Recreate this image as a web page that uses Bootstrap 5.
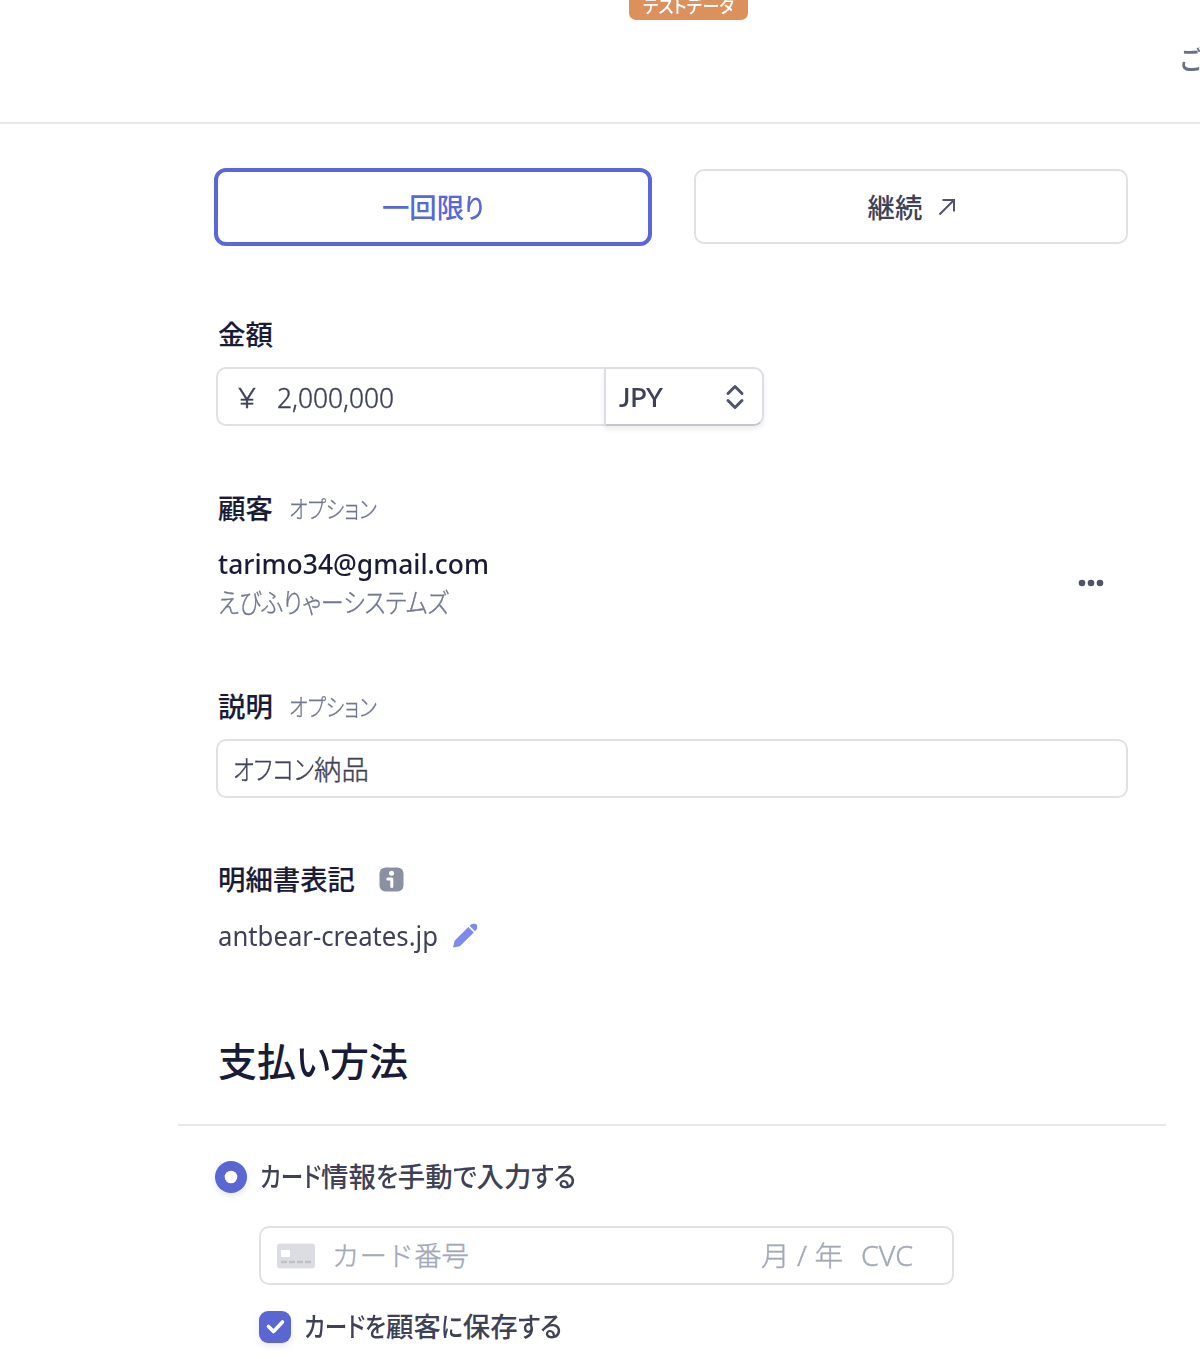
<!DOCTYPE html>
<html lang="ja">
<head>
<meta charset="utf-8">
<meta name="viewport" content="width=device-width, initial-scale=1">
<title>支払いを作成</title>
<link href="https://cdn.jsdelivr.net/npm/bootstrap@5.3.0/dist/css/bootstrap.min.css" rel="stylesheet">
<style>
body{font-family:"Noto Sans","Noto Sans CJK JP",sans-serif;font-size:27.4px;line-height:40px;color:#3f4257;background:#fff;overflow:hidden;height:1359px}
.topbar{height:124px;border-bottom:2px solid #e7e9f2}
.test-tag{left:629px;top:-14px;width:119px;height:34px;border-radius:7px;background:#dc915d;color:#fff;font-size:18px;font-weight:500;line-height:41px;padding-left:14px}
.help-link{left:1180px;top:40px;width:20px;overflow:hidden;color:#6a7084;font-weight:500;white-space:nowrap}
.pay-form{width:912px;margin-left:216px}
.type-row{padding-top:44px;height:123px}
.type-btn{border-radius:10px;border:2px solid #e0e1e5;background:#fff;padding-top:2px}
.type-one{width:438px;height:78px;margin-left:-2px;border:4px solid #5a67d8;color:#5a67d8;border-radius:12px}
.type-rec{width:434px;height:75px;margin-top:1px;gap:16px;padding-left:2px}
.type-rec svg{margin-bottom:2px}
.strong-text{font-weight:500}
.field-label{color:#1a1b36;padding-left:2px;gap:16px;line-height:42px;-webkit-text-stroke:.15px currentColor}
.optional{color:#717890;font-weight:300;font-size:24px;-webkit-text-stroke:.35px currentColor}
.box{border:2px solid #e0e1e5;border-radius:10px;height:59px;padding-top:2px}
.money{width:388px;border-right:0;border-radius:10px 0 0 10px}
.yen{padding-left:20px;width:59px}
.currency{width:160px;height:59px;border:2px solid #dddde4;border-bottom-color:#c5c5cf;border-radius:0 10px 10px 0;box-shadow:0 3px 5px rgba(60,66,87,.1);padding:0 17px 0 13px}
.currency .fit{font-family:Lato,"Noto Sans",sans-serif;font-weight:600}
.fit{display:inline-block;white-space:nowrap;transform-origin:0 50%;font-feature-settings:"palt"}
.thin{font-weight:300;-webkit-text-stroke:.4px currentColor}
.mail{color:#1a1b36;font-weight:500;line-height:38px}
.company{color:#717890;line-height:40px}
.customer{height:78px;padding-left:2px}
.title-lg{font-size:39px;color:#1a1b36;line-height:54px;padding-left:2px}
.divider{width:988px;height:2px;margin-left:-38px;background:#e6e9ef}
.card-box{width:695px;margin-left:43px;padding:0 39px 0 16px;color:#a3a9b8}
.soft{filter:drop-shadow(0 3px 3px rgba(60,66,87,.12))}
.save-row{margin-left:43px;gap:13px}
.radio-row{gap:13px;margin-left:-1px}
svg{flex:none;display:block}
</style>
</head>
<body>
<header class="topbar position-relative">
  <div class="test-tag position-absolute"><span class="fit" data-w="91">テストデータ</span></div>
  <div class="help-link position-absolute"><span class="fit" data-w="22">ご</span></div>
</header>
<main class="pay-form">
  <div class="type-row d-flex justify-content-between align-items-start">
    <div class="type-btn type-one strong-text d-flex align-items-center justify-content-center"><span>一回限<span class="fit" data-w="20">り</span></span></div>
    <div class="type-btn type-rec strong-text d-flex align-items-center justify-content-center"><span>継続</span>
      <svg width="18" height="18" viewBox="0 0 18 18" fill="none" stroke="#50546b" stroke-width="2"><path d="M1.500 16.500 16 2M4.500 2H16V13.500"/></svg>
    </div>
  </div>
  <section style="padding-top:67px">
    <div class="field-label strong-text">金額</div>
    <div class="d-flex" style="margin-top:11px">
      <div class="box money d-flex align-items-center thin"><span class="yen"><span class="fit" data-w="18">¥</span></span><span class="fit" data-w="117">2,000,000</span></div>
      <div class="currency d-flex align-items-center justify-content-between"><span class="fit" data-w="44">JPY</span>
        <svg width="20" height="26" viewBox="0 0 20 26" fill="none" stroke="#50546b" stroke-width="3" stroke-linecap="round" stroke-linejoin="round"><path d="M3 9.500 10 2.500l7 7M3 16.500l7 7 7-7"/></svg>
      </div>
    </div>
  </section>
  <section style="padding-top:62px">
    <div class="field-label strong-text d-flex"><span>顧客</span><span class="optional fit" data-w="88">オプション</span></div>
    <div class="customer d-flex justify-content-between" style="margin-top:15px">
      <div><div class="mail"><span class="fit" data-w="271">tarimo34@gmail.com</span></div><div class="company thin"><span class="fit" data-w="231">えびふりゃーシステムズ</span></div></div>
      <svg width="26" height="8" viewBox="0 0 26 8" fill="#50546b" style="margin:34px 24px 0 0"><circle cx="4" cy="4" r="3.300"/><circle cx="13" cy="4" r="3.300"/><circle cx="22" cy="4" r="3.300"/></svg>
    </div>
  </section>
  <section style="padding-top:63px">
    <div class="field-label strong-text d-flex"><span>説明</span><span class="optional fit" data-w="88">オプション</span></div>
    <div class="box d-flex align-items-center thin" style="margin-top:11px;padding-left:15px"><span class="fit" data-w="81">オフコン</span><span>納品</span></div>
  </section>
  <section style="padding-top:61px">
    <div class="field-label strong-text d-flex align-items-center" style="gap:24px"><span>明細書表記</span>
      <svg width="25" height="25" viewBox="0 0 25 25" style="margin-bottom:2px"><rect x=".5" y=".5" width="24" height="24" rx="6" fill="#8b91a3"/><circle cx="12.500" cy="6.300" r="2.500" fill="#fff"/><path d="M8.800 12h4v7.500" fill="none" stroke="#fff" stroke-width="3" stroke-linecap="round" stroke-linejoin="round"/></svg>
    </div>
    <div class="d-flex align-items-center" style="margin-top:15px;padding-left:2px;gap:14px"><span class="fit" data-w="220">antbear-creates.jp</span>
      <svg width="26" height="26" viewBox="0 0 26 26" fill="#7d8bee"><path d="M1 24.500 2.600 17.800 16.400 4 21.800 9.400 7.800 23.200ZM17.600 2.800 19 1.500C20.500.300 25.500.300 25 2.500 25.300 4.500 25 6 24.200 7L23 8.200Z"/></svg>
    </div>
  </section>
  <h1 class="title-lg strong-text mb-0" style="margin-top:78px">支払<span class="fit" data-w="34">い</span>方法</h1>
  <div class="divider" style="margin-top:36px"></div>
  <div class="radio-row strong-text d-flex align-items-center" style="margin-top:31px">
    <svg class="soft" width="32" height="40" viewBox="0 0 32 40"><circle cx="16" cy="20" r="16" fill="#5a67d3"/><circle cx="16" cy="20" r="6.300" fill="#fff"/></svg>
    <span><span class="fit" data-w="61">カード</span>情報<span class="fit" data-w="22">を</span>手動<span class="fit" data-w="24">で</span>入力<span class="fit" data-w="45">する</span></span>
  </div>
  <div class="box card-box thin d-flex align-items-center" style="margin-top:29px">
    <svg width="38" height="26" viewBox="0 0 38 26"><rect width="38" height="25" y=".5" rx="3" fill="#dcdde2"/><rect x="4" y="7" width="9" height="7" rx="1" fill="#fff"/><path d="M4 19h31" stroke="#bfc1c9" stroke-width="2.500" stroke-dasharray="6 2"/></svg>
    <span style="padding-left:17px">カード番号</span>
    <span class="ms-auto fit" data-w="82">月 / 年</span><span style="padding-left:18px"><span class="fit" data-w="52">CVC</span></span>
  </div>
  <div class="save-row strong-text d-flex align-items-center" style="margin-top:22px">
    <svg class="soft" width="32" height="40" viewBox="0 0 32 40"><rect y="4" width="32" height="32" rx="9" fill="#5a67d3"/><path d="m9.500 19.500 5 5 9-9.500" fill="none" stroke="#fff" stroke-width="3.600" stroke-linecap="round" stroke-linejoin="round"/></svg>
    <span><span class="fit" data-w="82">カードを</span>顧客<span class="fit" data-w="22">に</span>保存<span class="fit" data-w="44">する</span></span>
  </div>
</main>
<script src="https://cdn.jsdelivr.net/npm/bootstrap@5.3.0/dist/js/bootstrap.bundle.min.js"></script>
<script>
// Condense each run to its set width and keep the following text flush with it.
document.querySelectorAll('.fit').forEach(function (el) {
  var target = +el.dataset.w, natural = el.getBoundingClientRect().width;
  el.style.transform = 'scaleX(' + target / natural + ')';
  el.style.marginRight = (target - natural) + 'px';
});
</script>
</body>
</html>
